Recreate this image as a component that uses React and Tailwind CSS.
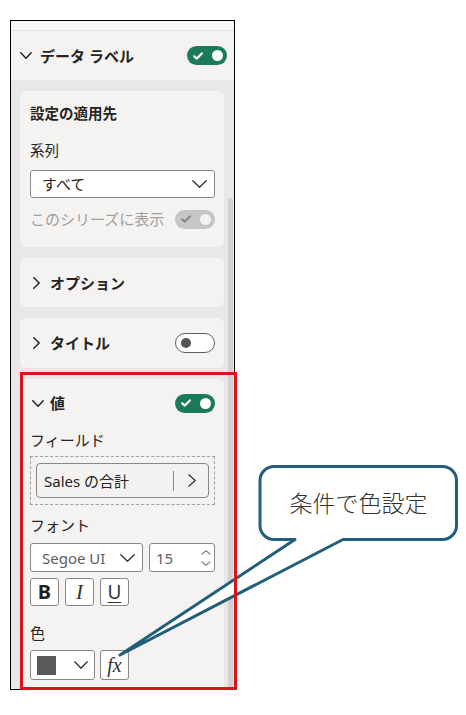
import React from "react";

const FONT = "font-['Noto_Sans','Noto_Sans_CJK_JP',sans-serif]";

function ChevronDown({ w = 12, h = 7, color = "#252423", sw = 1.5 }) {
  return (
    <svg width={w} height={h} viewBox={`0 0 ${w} ${h}`} className="block shrink-0">
      <polyline points={`0.8,0.8 ${w / 2},${h - 0.8} ${w - 0.8},0.8`} fill="none" stroke={color} strokeWidth={sw} strokeLinecap="round" strokeLinejoin="round" />
    </svg>
  );
}

function ChevronUp({ w = 10, h = 5, color = "#8a8886", sw = 1.2 }) {
  return (
    <svg width={w} height={h} viewBox={`0 0 ${w} ${h}`} className="block shrink-0">
      <polyline points={`0.8,${h - 0.8} ${w / 2},0.8 ${w - 0.8},${h - 0.8}`} fill="none" stroke={color} strokeWidth={sw} strokeLinecap="round" strokeLinejoin="round" />
    </svg>
  );
}

function ChevronRight({ w = 7, h = 12, color = "#252423", sw = 1.5 }) {
  return (
    <svg width={w} height={h} viewBox={`0 0 ${w} ${h}`} className="block shrink-0">
      <polyline points={`0.8,0.8 ${w - 0.8},${h / 2} 0.8,${h - 0.8}`} fill="none" stroke={color} strokeWidth={sw} strokeLinecap="round" strokeLinejoin="round" />
    </svg>
  );
}

function Check({ color }) {
  return (
    <svg width="10" height="8" viewBox="0 0 10 8" className="block shrink-0">
      <polyline points="1.2,4.2 3.8,6.6 8.8,1.4" fill="none" stroke={color} strokeWidth="2.2" strokeLinecap="round" strokeLinejoin="round" />
    </svg>
  );
}

function ToggleOn() {
  return (
    <div className="w-[40px] h-[19px] rounded-full bg-[#1b7a5c] flex items-center justify-between pl-[6px] pr-[4px] shrink-0">
      <Check color="#ffffff" />
      <div className="w-[11px] h-[11px] rounded-full bg-white" />
    </div>
  );
}

function ToggleDisabled() {
  return (
    <div className="w-[40px] h-[19px] rounded-full bg-[#c8c6c4] flex items-center justify-between pl-[6px] pr-[4px] shrink-0">
      <Check color="#8a8886" />
      <div className="w-[11px] h-[11px] rounded-full bg-[#f3f2f1]" />
    </div>
  );
}

function ToggleOff() {
  return (
    <div className="w-[40px] h-[20px] rounded-full bg-white border border-[#605e5c] flex items-center pl-[5px] shrink-0">
      <div className="w-[10px] h-[10px] rounded-full bg-[#555555]" />
    </div>
  );
}

export default function App() {
  return (
    <div className={`relative w-[466px] h-[715px] bg-white overflow-hidden pt-[20px] pl-[10px] ${FONT} text-[#252423]`}>
      {/* Panel frame */}
      <div className="w-[225px] h-[670px] border border-black flex flex-col overflow-hidden">
        <div className="h-[10px] bg-[#f7f7f7] border-b border-[#e1e0df] shrink-0" />
        <div className="h-[49px] bg-[#f4f3f2] flex items-center pl-[9px] pr-[7px] shrink-0">
          <ChevronDown w={12} h={7} />
          <span className="ml-[8px] text-[15px] leading-[20px] font-bold">データ ラベル</span>
          <div className="ml-auto">
            <ToggleOn />
          </div>
        </div>
        <div className="flex-1 min-h-0 flex bg-[#e9e8e7]">
          <div className="w-[213px] pl-[9px] pt-[11px] flex flex-col gap-[11px] shrink-0">
            {/* Card 1 */}
            <div className="w-[204px] rounded-[6px] bg-[#f4f3f2] pl-[10px] pr-[9px] pt-[12px] pb-[18px] shrink-0">
              <div className="h-[20px] leading-[20px] text-[14.5px] font-bold">設定の適用先</div>
              <div className="mt-[17px] h-[20px] leading-[20px] text-[14.5px]">系列</div>
              <div className="mt-[10px] h-[28px] bg-white border border-[#8a8886] rounded-[3px] flex items-center pl-[11px] pr-[7px]">
                <span className="text-[15px] leading-[20px]">すべて</span>
                <div className="ml-auto">
                  <ChevronDown w={15} h={8} color="#323130" sw={1.3} />
                </div>
              </div>
              <div className="mt-[11px] h-[20px] flex items-center justify-between">
                <span className="text-[15px] leading-[20px] text-[#a19f9d]">このシリーズに表示</span>
                <ToggleDisabled />
              </div>
            </div>
            {/* Card 2 */}
            <div className="w-[204px] h-[49px] rounded-[6px] bg-[#f4f3f2] flex items-center pl-[13px] shrink-0">
              <ChevronRight />
              <span className="ml-[10px] text-[15px] leading-[20px] font-bold">オプション</span>
            </div>
            {/* Card 3 */}
            <div className="w-[204px] h-[50px] rounded-[6px] bg-[#f4f3f2] flex items-center pl-[13px] pr-[9px] shrink-0">
              <ChevronRight />
              <span className="ml-[10px] text-[15px] leading-[20px] font-bold">タイトル</span>
              <div className="ml-auto">
                <ToggleOff />
              </div>
            </div>
            {/* Card 4 */}
            <div className="w-[204px] rounded-[6px] bg-[#f4f3f2] pl-[10px] pr-[9px] pt-[14px] pb-[12px] shrink-0">
              <div className="h-[20px] flex items-center">
                <div className="pl-[2px]">
                  <ChevronDown w={12} h={7} />
                </div>
                <span className="ml-[6px] text-[15px] leading-[20px] font-bold">値</span>
                <div className="ml-auto">
                  <ToggleOn />
                </div>
              </div>
              <div className="mt-[17px] h-[20px] leading-[20px] text-[15px]">フィールド</div>
              <div className="mt-[6px] h-[49px] border border-dashed border-[#a19f9d] px-[5px] py-[6px]">
                <div className="h-[35px] border border-[#8a8886] rounded-[4px] bg-[#f3f2f1] flex items-center pl-[7px]">
                  <span className="text-[15px] leading-[20px]">Sales の合計</span>
                  <div className="ml-auto w-[1px] h-[20px] bg-[#8a8886]" />
                  <div className="ml-[14px] mr-[12px]">
                    <ChevronRight w={8} h={13} color="#323130" sw={1.2} />
                  </div>
                </div>
              </div>
              <div className="mt-[10px] h-[20px] leading-[20px] text-[15px]">フォント</div>
              <div className="mt-[8px] flex gap-[6px]">
                <div className="w-[113px] h-[29px] bg-white border border-[#8a8886] rounded-[3px] flex items-center pl-[11px] pr-[7px]">
                  <span className="text-[15px] leading-[20px] text-[#605e5c]">Segoe UI</span>
                  <div className="ml-auto">
                    <ChevronDown w={15} h={8} color="#323130" sw={1.3} />
                  </div>
                </div>
                <div className="w-[66px] h-[29px] bg-white border border-[#8a8886] rounded-[3px] flex items-center pl-[6px] pr-[3px]">
                  <span className="text-[15px] leading-[20px] text-[#605e5c]">15</span>
                  <div className="ml-auto flex flex-col gap-[6px]">
                    <ChevronUp />
                    <ChevronDown w={10} h={5} color="#8a8886" sw={1.2} />
                  </div>
                </div>
              </div>
              <div className="mt-[6px] flex gap-[6px]">
                <div className="w-[29px] h-[28px] bg-white border border-[#8a8886] rounded-[3px] flex items-center justify-center">
                  <span className="text-[20px] leading-[20px] font-bold text-[#201f1e]">B</span>
                </div>
                <div className="w-[29px] h-[28px] bg-white border border-[#8a8886] rounded-[3px] flex items-center justify-center">
                  <span className="font-['Liberation_Serif',serif] italic text-[21px] leading-[20px] text-[#323130]">I</span>
                </div>
                <div className="w-[29px] h-[28px] bg-white border border-[#8a8886] rounded-[3px] flex items-center justify-center">
                  <span className="text-[19px] leading-[20px] underline decoration-1 underline-offset-[3px] text-[#323130]">U</span>
                </div>
              </div>
              <div className="mt-[17px] h-[20px] leading-[20px] text-[15px]">色</div>
              <div className="mt-[7px] flex gap-[5px]">
                <div className="w-[65px] h-[30px] bg-white border border-[#8a8886] rounded-[3px] flex items-center pl-[6px] pr-[6px]">
                  <div className="w-[19px] h-[19px] bg-[#595959]" />
                  <div className="ml-auto">
                    <ChevronDown w={14} h={8} color="#323130" sw={1.3} />
                  </div>
                </div>
                <div className="w-[29px] h-[30px] bg-white border border-[#8a8886] rounded-[3px] flex items-center justify-center">
                  <span className="font-['Liberation_Serif',serif] italic text-[20px] leading-[20px] text-[#323130]">fx</span>
                </div>
              </div>
            </div>
          </div>
          {/* scrollbar */}
          <div className="ml-[4px] w-[5px] flex flex-col">
            <div className="mt-[118px] flex-1 rounded-full bg-[#d2d1d0]" />
          </div>
        </div>
      </div>

      {/* Callout */}
      <svg className="absolute left-0 top-0 pointer-events-none" width="466" height="715" viewBox="0 0 466 715">
        <path
          d="M 274 466.5 H 442.5 A 14 14 0 0 1 456.5 480.5 V 525.5 A 14 14 0 0 1 442.5 539.5 H 343 L 120 655 L 295 539.5 H 274 A 14 14 0 0 1 260 525.5 V 480.5 A 14 14 0 0 1 274 466.5 Z"
          fill="#ffffff"
          stroke="#215e7a"
          strokeWidth="3"
          strokeLinejoin="round"
        />
      </svg>
      <div className="absolute left-[260px] top-[467px] w-[197px] h-[72px] flex items-center justify-center">
        <span className="text-[23px] leading-[30px] font-light text-[#333333]">条件で色設定</span>
      </div>

      {/* Red highlight */}
      <div className="absolute left-[20px] top-[372px] w-[217px] h-[318px] border-[3px] border-[#d9141b] pointer-events-none" />
    </div>
  );
}
